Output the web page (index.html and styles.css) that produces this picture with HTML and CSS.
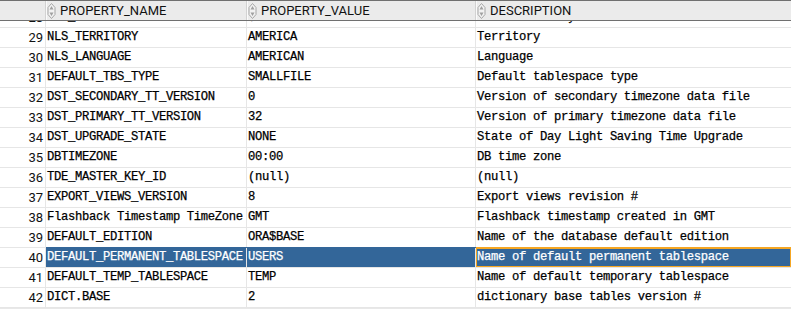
FILE: index.html
```html
<!DOCTYPE html>
<html lang="en">
<head>
  <meta charset="UTF-8">
  <title>DATABASE_PROPERTIES</title>
  <link rel="stylesheet" href="styles.css">
</head>
<body>
  <div class="grid">
    <div class="grid-head">
      <div class="hcell corner"></div>
      <div class="hcell">
        <svg class="sort" width="9" height="16" viewBox="0 0 9 16">
          <path d="M4.5 0.5 L8 4.5 V11.5 L4.5 15.5 L1 11.5 V4.5 Z" fill="#f2f2f2" stroke="#a6a6a6"></path>
          <path d="M4.5 3 L6.5 6.5 H2.5 Z M4.5 13 L6.5 9.5 H2.5 Z" fill="#a0a0a0"></path>
        </svg>
        <span>PROPERTY_NAME</span>
      </div>
      <div class="hcell">
        <svg class="sort" width="9" height="16" viewBox="0 0 9 16">
          <path d="M4.5 0.5 L8 4.5 V11.5 L4.5 15.5 L1 11.5 V4.5 Z" fill="#f2f2f2" stroke="#a6a6a6"></path>
          <path d="M4.5 3 L6.5 6.5 H2.5 Z M4.5 13 L6.5 9.5 H2.5 Z" fill="#a0a0a0"></path>
        </svg>
        <span>PROPERTY_VALUE</span>
      </div>
      <div class="hcell">
        <svg class="sort" width="9" height="16" viewBox="0 0 9 16">
          <path d="M4.5 0.5 L8 4.5 V11.5 L4.5 15.5 L1 11.5 V4.5 Z" fill="#f2f2f2" stroke="#a6a6a6"></path>
          <path d="M4.5 3 L6.5 6.5 H2.5 Z M4.5 13 L6.5 9.5 H2.5 Z" fill="#a0a0a0"></path>
        </svg>
        <span>DESCRIPTION</span>
      </div>
    </div>

    <div class="grid-body">
      <!-- scrolled part way into row 28 -->
      <div class="rows">
        <div class="row"><div class="num">28</div><div class="cell">NLS_CURRENCY</div><div class="cell">$</div><div class="cell">Local currency</div></div>
        <div class="row"><div class="num">29</div><div class="cell">NLS_TERRITORY</div><div class="cell">AMERICA</div><div class="cell">Territory</div></div>
        <div class="row"><div class="num">30</div><div class="cell">NLS_LANGUAGE</div><div class="cell">AMERICAN</div><div class="cell">Language</div></div>
        <div class="row"><div class="num">31</div><div class="cell">DEFAULT_TBS_TYPE</div><div class="cell">SMALLFILE</div><div class="cell">Default tablespace type</div></div>
        <div class="row"><div class="num">32</div><div class="cell">DST_SECONDARY_TT_VERSION</div><div class="cell">0</div><div class="cell">Version of secondary timezone data file</div></div>
        <div class="row"><div class="num">33</div><div class="cell">DST_PRIMARY_TT_VERSION</div><div class="cell">32</div><div class="cell">Version of primary timezone data file</div></div>
        <div class="row"><div class="num">34</div><div class="cell">DST_UPGRADE_STATE</div><div class="cell">NONE</div><div class="cell">State of Day Light Saving Time Upgrade</div></div>
        <div class="row"><div class="num">35</div><div class="cell">DBTIMEZONE</div><div class="cell">00:00</div><div class="cell">DB time zone</div></div>
        <div class="row"><div class="num">36</div><div class="cell">TDE_MASTER_KEY_ID</div><div class="cell">(null)</div><div class="cell">(null)</div></div>
        <div class="row"><div class="num">37</div><div class="cell">EXPORT_VIEWS_VERSION</div><div class="cell">8</div><div class="cell">Export views revision #</div></div>
        <div class="row"><div class="num">38</div><div class="cell">Flashback Timestamp TimeZone</div><div class="cell">GMT</div><div class="cell">Flashback timestamp created in GMT</div></div>
        <div class="row"><div class="num">39</div><div class="cell">DEFAULT_EDITION</div><div class="cell">ORA$BASE</div><div class="cell">Name of the database default edition</div></div>
        <div class="row selected"><div class="num">40</div><div class="cell">DEFAULT_PERMANENT_TABLESPACE</div><div class="cell">USERS</div><div class="cell focus">Name of default permanent tablespace</div></div>
        <div class="row"><div class="num">41</div><div class="cell">DEFAULT_TEMP_TABLESPACE</div><div class="cell">TEMP</div><div class="cell">Name of default temporary tablespace</div></div>
        <div class="row"><div class="num">42</div><div class="cell">DICT.BASE</div><div class="cell">2</div><div class="cell">dictionary base tables version #</div></div>
      </div>
    </div>
  </div>
</body>
</html>
```

FILE: styles.css
```css
:root {
  --cols: 46px 201px 229px 1fr;
  --line: #e6e6e6;
  --head-bg: #ebebeb;
  --head-border: #707070;
  --selected: #336699;
  --focus: #f5a623;
}

* {
  margin: 0;
  padding: 0;
  box-sizing: border-box;
}

html, body {
  width: 791px;
  height: 309px;
  overflow: hidden;
  background: #e8e8e8;
}

.grid {
  display: flex;
  flex-direction: column;
  height: 309px;
}

/* Column headers */
.grid-head {
  display: grid;
  grid-template-columns: var(--cols);
  height: 21px;
  background: var(--head-bg);
  border-top: 1px solid var(--head-border);
  border-bottom: 1px solid var(--head-border);
  font-family: Roboto, "Liberation Sans", sans-serif;
  font-size: 13px;
  color: #111;
}

.hcell {
  display: flex;
  align-items: center;
  gap: 4px;
  padding: 1px 0 0 1px;
  line-height: 18px;
  border-right: 1px solid #d2d2d2;
  box-shadow: inset 1px 0 0 #fafafa;
  white-space: nowrap;
  overflow: hidden;
}

.hcell.corner {
  box-shadow: none;
}

.hcell:last-child {
  border-right: none;
}

.sort {
  flex: none;
  margin-top: -1px;
}

/* Rows */
.grid-body {
  flex: 1;
  overflow: hidden;
}

.rows {
  margin-top: -13px;
}

.row {
  display: grid;
  grid-template-columns: var(--cols);
  height: 20px;
  background: #fff;
  border-bottom: 1px solid var(--line);
}

.num,
.cell {
  border-right: 1px solid var(--line);
  line-height: 19px;
  white-space: nowrap;
  overflow: hidden;
}

.num {
  text-align: right;
  padding-right: 2px;
  font-family: Roboto, "Liberation Sans", sans-serif;
  font-size: 13px;
  color: #111;
}

.cell {
  padding-left: 1px;
  font-family: "Liberation Mono", "Courier New", monospace;
  font-size: 12.2px;
  letter-spacing: -0.32px;
  color: #000;
  -webkit-text-stroke: 0.25px #000;
}

.cell:last-child {
  border-right: none;
}

.row.selected .cell {
  background: var(--selected);
  color: #fff;
  -webkit-text-stroke: 0.25px #fff;
  box-shadow: 0 -1px 0 var(--selected);
}

.row.selected .cell.focus {
  outline: 1px solid var(--focus);
  outline-offset: -1px;
  box-shadow: 0 -1px 0 var(--focus);
}
```
